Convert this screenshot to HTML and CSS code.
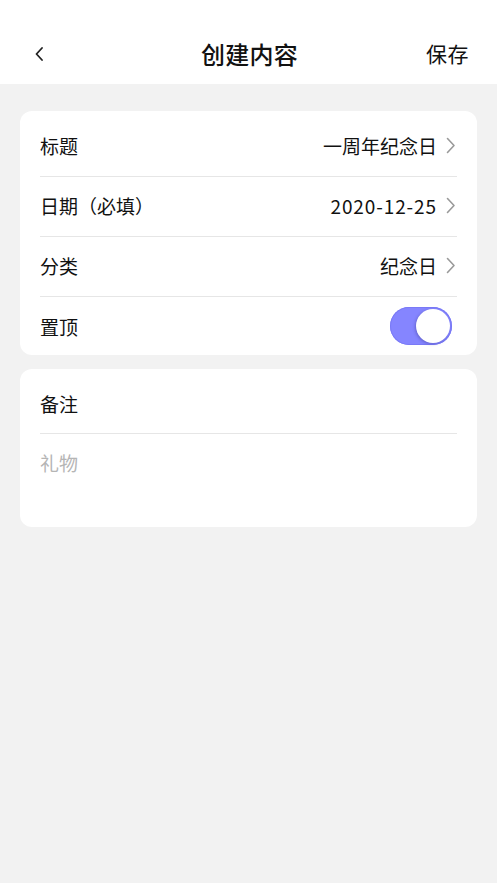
FILE: index.html
```html
<!DOCTYPE html>
<html lang="zh">
<head>
<meta charset="utf-8">
<link rel="stylesheet" href="styles.css">
</head>
<body>
<div class="page">
  <header class="nav">
    <div class="back">
      <svg width="10" height="14" viewBox="0 0 10 14"><path d="M8 1 L2.5 7 L8 13" fill="none" stroke="#222" stroke-width="1.8" stroke-linecap="round" stroke-linejoin="round"/></svg>
    </div>
    <div class="title">创建内容</div>
    <div class="save">保存</div>
  </header>
  <main class="content">
    <section class="card">
      <div class="row">
        <span class="label">标题</span>
        <span class="value">一周年纪念日<svg class="chev" width="10" height="17" viewBox="0 0 10 17"><path d="M1.5 1.5 L8 8.5 L1.5 15.5" fill="none" stroke="#9a9a9a" stroke-width="1.6" stroke-linecap="round" stroke-linejoin="round"/></svg></span>
      </div>
      <div class="row">
        <span class="label">日期（必填）</span>
        <span class="value"><span class="date">2020-12-25</span><svg class="chev" width="10" height="17" viewBox="0 0 10 17"><path d="M1.5 1.5 L8 8.5 L1.5 15.5" fill="none" stroke="#9a9a9a" stroke-width="1.6" stroke-linecap="round" stroke-linejoin="round"/></svg></span>
      </div>
      <div class="row">
        <span class="label">分类</span>
        <span class="value">纪念日<svg class="chev" width="10" height="17" viewBox="0 0 10 17"><path d="M1.5 1.5 L8 8.5 L1.5 15.5" fill="none" stroke="#9a9a9a" stroke-width="1.6" stroke-linecap="round" stroke-linejoin="round"/></svg></span>
      </div>
      <div class="row last">
        <span class="label">置顶</span>
        <span class="toggle"><span class="knob"></span></span>
      </div>
    </section>
    <section class="card note">
      <div class="row">
        <span class="label">备注</span>
      </div>
      <div class="placeholder">礼物</div>
    </section>
  </main>
</div>
</body>
</html>
```
FILE: styles.css
```css
* { box-sizing: border-box; }
html, body { margin: 0; padding: 0; }
body {
  background: #f2f2f2;
  font-family: "Noto Sans CJK SC", "Noto Sans", sans-serif;
  color: #111;
  width: 497px;
  height: 883px;
  overflow: hidden;
}
.nav {
  height: 84px;
  background: #fff;
  display: flex;
  align-items: center;
  justify-content: space-between;
  padding: 22px 28px 0 34px;
}
.back { width: 40px; display: flex; align-items: center; padding-top: 2px; }
.back svg { display: block; }
.title {
  font-size: 24px;
  font-weight: 500;
  letter-spacing: 0.2px;
  color: #111;
}
.save {
  font-size: 21px;
  color: #111;
  width: 44px;
  text-align: right;
  letter-spacing: 0.5px;
}
.content {
  padding: 27px 20px 0 20px;
  display: flex;
  flex-direction: column;
  gap: 14px;
}
.card {
  background: #fff;
  border-radius: 12px;
  padding: 6px 20px 0 20px;
}
.row {
  height: 60px;
  display: flex;
  align-items: center;
  justify-content: space-between;
  border-bottom: 1px solid #e6e6e6;
  font-size: 19px;
  padding-bottom: 2px;
}
.row.last { border-bottom: none; height: 58px; padding-bottom: 0; }
.label { color: #111; }
.value {
  display: flex;
  align-items: center;
  gap: 9px;
  color: #111;
}
.date { letter-spacing: 0.9px; }
.chev { display: block; margin-right: 1px; }
.toggle {
  width: 62px;
  height: 38px;
  border-radius: 19px;
  background: #8585ff;
  box-shadow: inset 0 0 0 1px #7a7af6;
  position: relative;
  margin-right: 5px;
}
.knob {
  position: absolute;
  right: 2px;
  top: 2px;
  width: 34px;
  height: 34px;
  border-radius: 50%;
  background: #fff;
  box-shadow: -1px 1px 3px rgba(40, 40, 120, 0.35);
}
.note { padding-top: 6px; height: 158px; }
.note .row { height: 59px; }
.placeholder {
  font-size: 19px;
  color: #b5b5b5;
  height: 58px;
  padding-bottom: 2px;
  display: flex;
  align-items: center;
}
```
